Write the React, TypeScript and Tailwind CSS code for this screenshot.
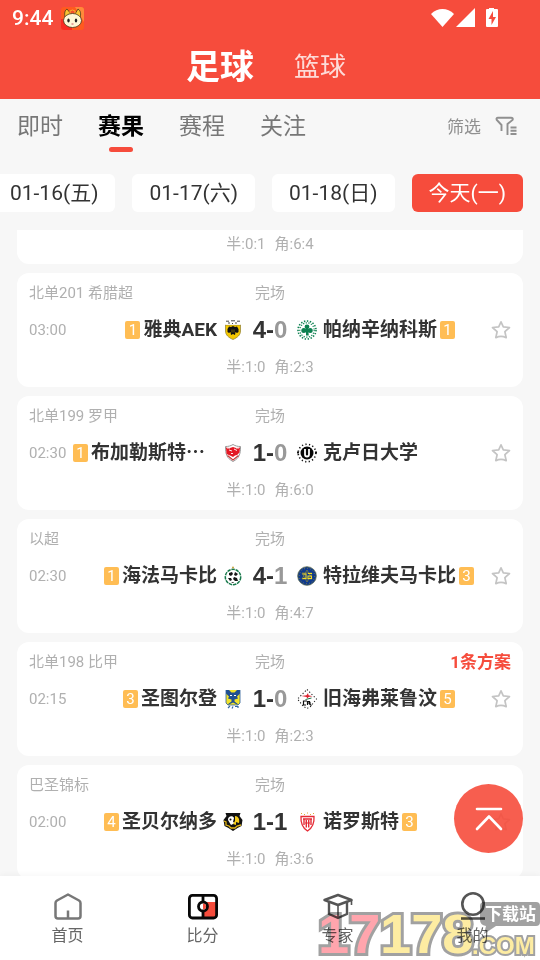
import { useState, type ReactNode } from 'react';

type Team = { name: string; rank?: number; crest: ReactNode };

type Match = {
  id: number;
  league: string;
  time: string;
  status: string;
  home: Team;
  away: Team;
  score: [number, number];
  half: string;
  corners: string;
  plans?: string;
};

const AekCrest = () => (
  <svg viewBox="0 0 20 20" className="size-5 shrink-0">
    <path d="M2.500 5h15v6c0 4-3 6.500-7.500 8.500C5.500 17.500 2.500 15 2.500 11z" fill="#f5c800" stroke="#8d7d30" strokeWidth=".7" />
    <path d="M2 .8h16l-1 4H3z" fill="#fff" />
    <path d="M3 1.200h3M8 .8h4M14 1.200h3M5 3h2M9 3.500h1M12 3h2" stroke="#333" strokeWidth=".9" />
    <path d="M10 6l2 1 2-.5 1.500 2.500 0 3-1.500 1-1.500-1-.5 3-2-1-2 1-.5-3-1.500 1-1.500-1 0-3L6 6.500 8 7z" fill="#111" />
    <path d="M9 9.500v3M11 9.500v3" stroke="#a58a00" strokeWidth=".7" />
  </svg>
);

const PanathinaikosCrest = () => (
  <svg viewBox="0 0 20 20" className="size-5 shrink-0">
    <circle cx="10" cy="10" r="9" fill="none" stroke="#0d8050" strokeWidth="1.600" strokeDasharray="1.400 1.600" />
    <circle cx="10" cy="10" r="7.200" fill="none" stroke="#0d8050" strokeWidth="1.200" strokeDasharray="1.200 1.500" />
    <g fill="#0d8050">
      <circle cx="10" cy="6.800" r="2.400" />
      <circle cx="6.800" cy="10.500" r="2.500" />
      <circle cx="13.200" cy="10.500" r="2.500" />
      <path d="M9 8h2l.8 7.500H9z" />
    </g>
  </svg>
);

const DinamoCrest = () => (
  <svg viewBox="0 0 20 20" className="size-5 shrink-0">
    <path d="M2.500 3.500c3 0 5-.5 7.500-2 2.500 1.500 4.500 2 7.500 2 0 7.500-1 11.500-7.500 15C3.500 15 2.500 11 2.500 3.500z" fill="#fff" stroke="#999" />
    <path d="M3 4.500l4 .5 3-1 3 1 4-.5-.5 5-2.500 2.500-2 .5L10 14l-3-1.500L3.500 11z" fill="#e31824" />
    <path d="M4.500 12.500L10 17l5.500-4.500" fill="none" stroke="#c33" strokeWidth="1.100" />
    <path d="M6 7l3 1M11 6l3 1.500M8 10.500h2M4 5l3 0M13 5l3 0" stroke="#fff" strokeWidth=".9" />
  </svg>
);

const ClujCrest = () => (
  <svg viewBox="0 0 20 20" className="size-5 shrink-0">
    <circle cx="10" cy="10" r="8.800" fill="none" stroke="#111" strokeWidth="1.600" strokeDasharray="1.200 2.400" />
    <path d="M0 9.500h2M18 9.500h2" stroke="#111" strokeWidth="2" />
    <circle cx="10" cy="10" r="6.500" fill="#080808" />
    <path d="M8 6v5.500q0 2 2 2t2-2V6" fill="none" stroke="#fff" strokeWidth="1.800" />
  </svg>
);

const HaifaCrest = () => (
  <svg viewBox="0 0 20 20" className="size-5 shrink-0">
    <circle cx="10" cy="11" r="7.700" fill="#fff" stroke="#17784a" strokeWidth="1.500" strokeDasharray="3.500 .8" />
    <path d="M6 7l3-1 1 2-2 2-2-1zM12 6l3 2-2 2-2-1zM5 12l3 0 1 2-2 1zM11 11l3 1 1 3-3 0-2-2zM8 16l3 0-1 1z" fill="#151515" />
    <circle cx="10" cy="1.500" r="1" fill="#c9a03b" />
  </svg>
);

const TelAvivCrest = () => (
  <svg viewBox="0 0 20 20" className="size-5 shrink-0">
    <circle cx="10" cy="10" r="9.300" fill="#0f3a8c" stroke="#5e6b4a" strokeWidth=".8" />
    <circle cx="10" cy="10" r="7.700" fill="none" stroke="#a3933a" strokeWidth=".7" strokeDasharray="1 2" />
    <path d="M10 4l5 9H5zM10 16L5 7h10z" fill="none" stroke="#8f8a3c" strokeWidth=".7" />
    <path d="M5.500 8H9v4.500H5.500M11 7.500h4M11 12.500h3.500V10H11z" fill="none" stroke="#f3dc25" strokeWidth="1.100" />
  </svg>
);

const SintTruidenCrest = () => (
  <svg viewBox="0 0 20 20" className="size-5 shrink-0">
    <path d="M3 1h14v13l-2 2H5l-2-2z" fill="#f2e32a" />
    <path d="M3 1h3l2.500 2.500h3L14 1h3v3.500l-3 3 1 2-3.500 1v2l4 3H14l-4-2-4 2H4.500l4-3v-2L5 9.500l1-2-3-3z" fill="#1f4f91" />
    <path d="M3 1v13l2 2h10l2-2V1" fill="none" stroke="#2c5d98" strokeWidth=".8" />
    <path d="M7 6.500h2M11 6.500h2" stroke="#fff" />
    <path d="M5 19l2-2M9 19.500l1-2M12 17.500h3v1.500" fill="none" stroke="#3567a5" strokeWidth="1.200" />
  </svg>
);

const LiegeCrest = () => (
  <svg viewBox="0 0 20 20" className="size-5 shrink-0">
    <path d="M10 .5L19.500 10 13.500 17.500 10 19.500 6.500 17.500.5 10z" fill="none" stroke="#222" strokeWidth="1.100" strokeDasharray="1.200 2" />
    <path d="M4.500 7l5-.8L11 4l.5 2.200 4 1-4 .8-1 1.500-1-1.500z" fill="#dc2330" />
    <path d="M8.500 10.500l6-1.500" stroke="#24734a" />
    <path d="M10 12H6.500v4H9M10.500 16v-3.500h2V15l2 1.500M11 14h3" fill="none" stroke="#111" strokeWidth="1.200" />
  </svg>
);

const SaoBernardoCrest = () => (
  <svg viewBox="0 0 20 20" className="size-5 shrink-0">
    <path d="M2.500 1h15l-1 3 3 4-1 6-4 2-4.500 3-4.500-3-4-2-1-6 3-4z" fill="#111" />
    <path d="M1 9l2 1v3l3 1 2 2h4l2-2 4-1" fill="none" stroke="#e2b616" strokeWidth="1.300" />
    <path d="M5 8c-.5-4 5-5 6-2l-1 4 2 1-4 2z" fill="#fff" />
    <path d="M12 4c3 0 5 3 4 7l-3-1v3l-3-1 2-3z" fill="#f4cc1b" />
    <circle cx="7.500" cy="7.500" r="1" fill="#111" />
  </svg>
);

const NoroesteCrest = () => (
  <svg viewBox="0 0 20 20" className="size-5 shrink-0">
    <path d="M4 1.500h1M7 2.500h1M10 1h1M13 2.500h1M16 1.500h1" stroke="#e0ae36" strokeWidth="1.200" />
    <path d="M4 4.500h13c.5 7-1 11-6.500 14.500C5 15.500 3.500 11.500 4 4.500z" fill="#fff" stroke="#e52b36" strokeWidth="1.300" />
    <path d="M6 7h9M7 7v6M9.300 8v7.500M11.700 8v7.500M14 7v6" stroke="#e52b36" strokeWidth="1.400" />
    <path d="M8 11h5" stroke="#e52b36" />
  </svg>
);

const DATES = ['01-16(五)', '01-17(六)', '01-18(日)', '今天(一)'];
const TABS = ['即时', '赛果', '赛程', '关注'];

const MATCHES: Match[] = [
  {
    id: 1,
    league: '北单201 希腊超',
    time: '03:00',
    status: '完场',
    home: { name: '雅典AEK', rank: 1, crest: <AekCrest /> },
    away: { name: '帕纳辛纳科斯', rank: 1, crest: <PanathinaikosCrest /> },
    score: [4, 0],
    half: '1:0',
    corners: '2:3',
  },
  {
    id: 2,
    league: '北单199 罗甲',
    time: '02:30',
    status: '完场',
    home: { name: '布加勒斯特⋯', rank: 1, crest: <DinamoCrest /> },
    away: { name: '克卢日大学', crest: <ClujCrest /> },
    score: [1, 0],
    half: '1:0',
    corners: '6:0',
  },
  {
    id: 3,
    league: '以超',
    time: '02:30',
    status: '完场',
    home: { name: '海法马卡比', rank: 1, crest: <HaifaCrest /> },
    away: { name: '特拉维夫马卡比', rank: 3, crest: <TelAvivCrest /> },
    score: [4, 1],
    half: '1:0',
    corners: '4:7',
  },
  {
    id: 4,
    league: '北单198 比甲',
    time: '02:15',
    status: '完场',
    home: { name: '圣图尔登', rank: 3, crest: <SintTruidenCrest /> },
    away: { name: '旧海弗莱鲁汶', rank: 5, crest: <LiegeCrest /> },
    score: [1, 0],
    half: '1:0',
    corners: '2:3',
    plans: '1条方案',
  },
  {
    id: 5,
    league: '巴圣锦标',
    time: '02:00',
    status: '完场',
    home: { name: '圣贝尔纳多', rank: 4, crest: <SaoBernardoCrest /> },
    away: { name: '诺罗斯特', rank: 3, crest: <NoroesteCrest /> },
    score: [1, 1],
    half: '1:0',
    corners: '3:6',
  },
];

function Rank({ value }: { value: number }) {
  return (
    <span className="flex h-[18px] w-[15px] shrink-0 items-center justify-center rounded-xs bg-[#ffbd54] text-[15px] leading-none text-white">
      {value}
    </span>
  );
}

function Extra({ half, corners }: { half: string; corners: string }) {
  return (
    <p className="flex justify-center gap-[9px] text-[15px] leading-5 text-[#b0b0b0]">
      <span>半:{half}</span>
      <span>角:{corners}</span>
    </p>
  );
}

function MatchCard({ match }: { match: Match }) {
  const { home, away, score } = match;
  const [starred, setStarred] = useState(false);
  const truncated = home.name.endsWith('⋯');

  return (
    <article className="rounded-xl bg-white px-3 pt-2.5 pb-2.5">
      <div className="grid grid-cols-[1fr_auto_1fr] text-[15px] leading-5 text-[#b0b0b0]">
        <span>{match.league}</span>
        <span>{match.status}</span>
        {match.plans ? (
          <a href="#plans" className="text-right text-[17px] font-bold text-[#f64c3c]">
            {match.plans}
          </a>
        ) : null}
      </div>

      <div className="mt-3 mb-3 grid h-[30px] grid-cols-[1fr_54px_1fr] items-center">
        <div className="flex items-center">
          <time className="text-[15px] text-[#b0b0b0]">{match.time}</time>
          <span className="flex-1" />
          {home.rank ? <Rank value={home.rank} /> : null}
          <span
            className={`mr-1.5 ml-[3px] text-[19px] leading-6 font-bold whitespace-nowrap text-[#333] ${
              truncated ? 'w-[126px]' : ''
            }`}
          >
            {home.name}
          </span>
          {home.crest}
        </div>

        <p className="text-center font-['Liberation_Sans','Roboto',sans-serif] text-2xl leading-[30px] font-bold text-[#333]">
          {score[0]}-<span className={score[1] < score[0] ? 'text-[#999]' : ''}>{score[1]}</span>
        </p>

        <div className="flex items-center">
          {away.crest}
          <span className="mr-[3px] ml-1.5 text-[19px] leading-6 font-bold whitespace-nowrap text-[#333]">
            {away.name}
          </span>
          {away.rank ? <Rank value={away.rank} /> : null}
          <button
            type="button"
            aria-label="关注比赛"
            aria-pressed={starred}
            className="ml-auto"
            onClick={() => setStarred((prev) => !prev)}
          >
            <svg viewBox="0 0 20 20" className="size-5" fill={starred ? '#ffbd54' : 'none'}>
              <path
                d="M10 1.800l2.300 5 6.200.7-4.600 4.200 1.300 6q-2.700-1.400-5.200-1.400t-5.200 1.400l1.300-6L1.500 7.500l6.200-.7z"
                stroke="#c4c4c4"
                strokeWidth="1.700"
                strokeLinejoin="round"
              />
            </svg>
          </button>
        </div>
      </div>

      <Extra half={match.half} corners={match.corners} />
    </article>
  );
}

function StatusBar() {
  return (
    <div className="flex h-9 items-center px-3 text-white">
      <span className="text-[21px] leading-6 font-medium">9:44</span>
      <svg viewBox="0 0 23 23" className="ml-2 size-[23px]">
        <rect width="23" height="23" rx="3" fill="#ff5a1f" />
        <path d="M0 12h11v11H3q-3 0-3-3z" fill="#fb2b22" />
        <path d="M14 0h6q3 0 3 3v12z" fill="#ff8a3a" />
        <path d="M4 10C3 6 4 3 6 2l4 5h4l3-5c3 2 3 5 2 9" fill="#f9c331" stroke="#4a3818" strokeWidth=".8" />
        <path d="M9 7V4l2.500-1L14 4v3" fill="#f2502a" stroke="#fbc02d" strokeWidth=".8" />
        <ellipse cx="11.500" cy="13.500" rx="9" ry="7" fill="#fff6d5" stroke="#4a3818" strokeWidth=".8" />
        <ellipse cx="7.500" cy="13.500" rx="1.200" ry="2" fill="#222" />
        <ellipse cx="15" cy="13.500" rx="1.200" ry="2" fill="#222" />
        <path d="M10.500 17h2" stroke="#c56" />
      </svg>
      <svg viewBox="0 0 68 20" className="mr-[29px] ml-auto h-5 w-[68px]" fill="#fff">
        <path d="M0 6C6.500-.7 16.500-.7 23 6L11.500 19z" />
        <path d="M44 0v19H25z" />
        <path
          fillRule="evenodd"
          d="M58-.5h5V1h3q1 0 1 1v16q0 1-1 1H56q-1 0-1-1V2q0-1 1-1h2zM62 3l-4.500 8h3v6l4.500-8h-3z"
        />
      </svg>
    </div>
  );
}

const navIcons = {
  home: (
    <svg viewBox="0 0 30 28" className="h-7 w-[30px]" fill="none" stroke="#777" strokeWidth="2.500" strokeLinejoin="round">
      <path d="M15 2.500L26 8.500Q27.500 9.500 27.500 11v13q0 2.500-2.500 2.500H5Q2.500 26.500 2.500 24V11q0-1.500 1.500-2.500z" />
      <path d="M15 18.500v7.500" />
    </svg>
  ),
  score: (
    <svg viewBox="0 0 30 28" className="h-7 w-[30px]" fill="none" stroke="#080808" strokeWidth="2.800">
      <path d="M15 10h14v16H15z" fill="#f64c3c" stroke="none" />
      <rect x="1.400" y="3.400" width="27.200" height="22.600" rx="3" />
      <path d="M15 3v23" />
      <circle cx="15" cy="14.500" r="4.500" fill="#fff" />
      <path d="M15 11.500v6a3 3 0 0 0 0-6z" fill="#f64c3c" stroke="none" />
    </svg>
  ),
  expert: (
    <svg viewBox="0 0 30 28" className="h-7 w-[30px]" fill="none" stroke="#555" strokeWidth="2.400" strokeLinejoin="round">
      <path d="M1.500 8L15 3l13.500 5L15 13z" />
      <path d="M6 10v12l9 4 9-4V10" />
      <path d="M15 13v12M28.500 8v5" strokeWidth="1.600" />
    </svg>
  ),
  mine: (
    <svg viewBox="0 0 30 28" className="h-7 w-[30px]" fill="none" stroke="#555" strokeWidth="2.600">
      <circle cx="15" cy="12" r="10.700" />
      <path d="M3 26.500h24" />
    </svg>
  ),
};

const NAV = [
  { label: '首页', href: '#home', icon: navIcons.home },
  { label: '比分', href: '#score', icon: navIcons.score },
  { label: '专家', href: '#expert', icon: navIcons.expert },
  { label: '我的', href: '#mine', icon: navIcons.mine },
];

function SiteMark() {
  return (
    <svg
      viewBox="0 0 224 60"
      className="pointer-events-none absolute right-0 bottom-0 h-[60px] w-56 opacity-80 mix-blend-multiply"
      fontFamily="'Liberation Sans', sans-serif"
      fontWeight="700"
      stroke="#8a8a8a"
      strokeWidth="6"
      strokeLinejoin="miter"
      paintOrder="stroke"
    >
      <text x="2" y="53" fontSize="56" fill="#ff8e98">
        17
      </text>
      <text x="64" y="53" fontSize="56" fill="#fde88b">
        178
      </text>
      <text x="156" y="54" fontSize="24" fill="#fde88b" strokeWidth="4">
        .COM
      </text>
      <path d="M168 2h52q4 0 4 4v16q0 4-4 4h-40l-12 8 2-8q-6-1-6-6V6q0-4 4-4z" fill="#8a8a8a" stroke="none" />
      <text x="169" y="20" fontSize="17" fill="#fff" stroke="none" fontFamily="'Noto Sans CJK SC', sans-serif">
        下载站
      </text>
    </svg>
  );
}

export default function App() {
  const [tab, setTab] = useState('赛果');
  const [date, setDate] = useState('今天(一)');

  return (
    <div className="relative flex h-screen flex-col overflow-hidden bg-[#f7f7f7] font-['Roboto','Noto_Sans_CJK_SC',sans-serif]">
      <header className="bg-[#f64c3c]">
        <StatusBar />
        <nav className="flex h-[63px] items-center justify-center gap-10 pr-2 text-white">
          <button type="button" className="text-[34px] font-bold">
            足球
          </button>
          <button type="button" className="text-[26px] opacity-80">
            篮球
          </button>
        </nav>
      </header>

      <div className="flex h-[57px] shrink-0 items-start px-[17px] pt-2.5">
        <nav className="flex gap-[35px]">
          {TABS.map((label) => (
            <button
              type="button"
              key={label}
              className={`flex flex-col items-center text-[23px] leading-9 ${
                tab === label ? 'font-bold text-black' : 'text-[#777]'
              }`}
              onClick={() => setTab(label)}
            >
              {label}
              {tab === label ? <span className="mt-0.5 h-[5px] w-6 rounded-full bg-[#f64c3c]" /> : null}
            </button>
          ))}
        </nav>
        <button type="button" className="ml-auto flex items-center gap-3.5 pr-1.5 text-[17px] leading-9 text-[#909090]">
          筛选
          <svg viewBox="0 0 22 22" className="size-[22px]" fill="none" stroke="#909090" strokeWidth="1.900">
            <path d="M6.500 15V9L1.800 4Q.8 1.800 3 1.800h13q2.500 0 1.500 2.200L12.500 8v11" />
            <path d="M15.500 11.500h6M15.500 14.800h6M15.500 18h6" />
          </svg>
        </button>
      </div>

      <div className="flex shrink-0 justify-end gap-[17px] overflow-hidden pt-[18px] pr-[17px]">
        {DATES.map((label) => (
          <button
            type="button"
            key={label}
            className={`h-[38px] shrink-0 rounded-md px-[17px] pt-0.5 text-[21px] whitespace-nowrap ${
              date === label ? 'bg-[#f64c3c] text-white' : 'bg-white text-[#333]'
            }`}
            onClick={() => setDate(label)}
          >
            {label}
          </button>
        ))}
      </div>

      <main className="mt-[18px] flex min-h-0 flex-1 flex-col gap-[9px] overflow-hidden px-[17px]">
        <article className="rounded-b-xl bg-white pt-1 pb-2.5">
          <Extra half="0:1" corners="6:4" />
        </article>
        {MATCHES.map((match) => (
          <MatchCard key={match.id} match={match} />
        ))}
      </main>

      <button
        type="button"
        aria-label="回到顶部"
        className="absolute right-[17px] bottom-[107px] flex size-[69px] items-center justify-center rounded-full bg-[#f64c3c]/90"
      >
        <svg viewBox="0 0 28 26" className="h-[26px] w-7" fill="none" stroke="#fff" strokeWidth="2.600" strokeLinecap="round" strokeLinejoin="round">
          <path d="M2 3h24M2 23L14 10.500 26 23" />
        </svg>
      </button>

      <footer className="relative shrink-0 bg-white shadow-[0_-1px_6px_rgba(0,0,0,0.04)]">
        <nav className="grid h-[84px] grid-cols-4">
          {NAV.map((item) => (
            <a key={item.label} href={item.href} className="flex flex-col items-center pt-4 text-base leading-6 text-[#666]">
              {item.icon}
              <span className="mt-1">{item.label}</span>
            </a>
          ))}
        </nav>
        <SiteMark />
      </footer>
    </div>
  );
}
